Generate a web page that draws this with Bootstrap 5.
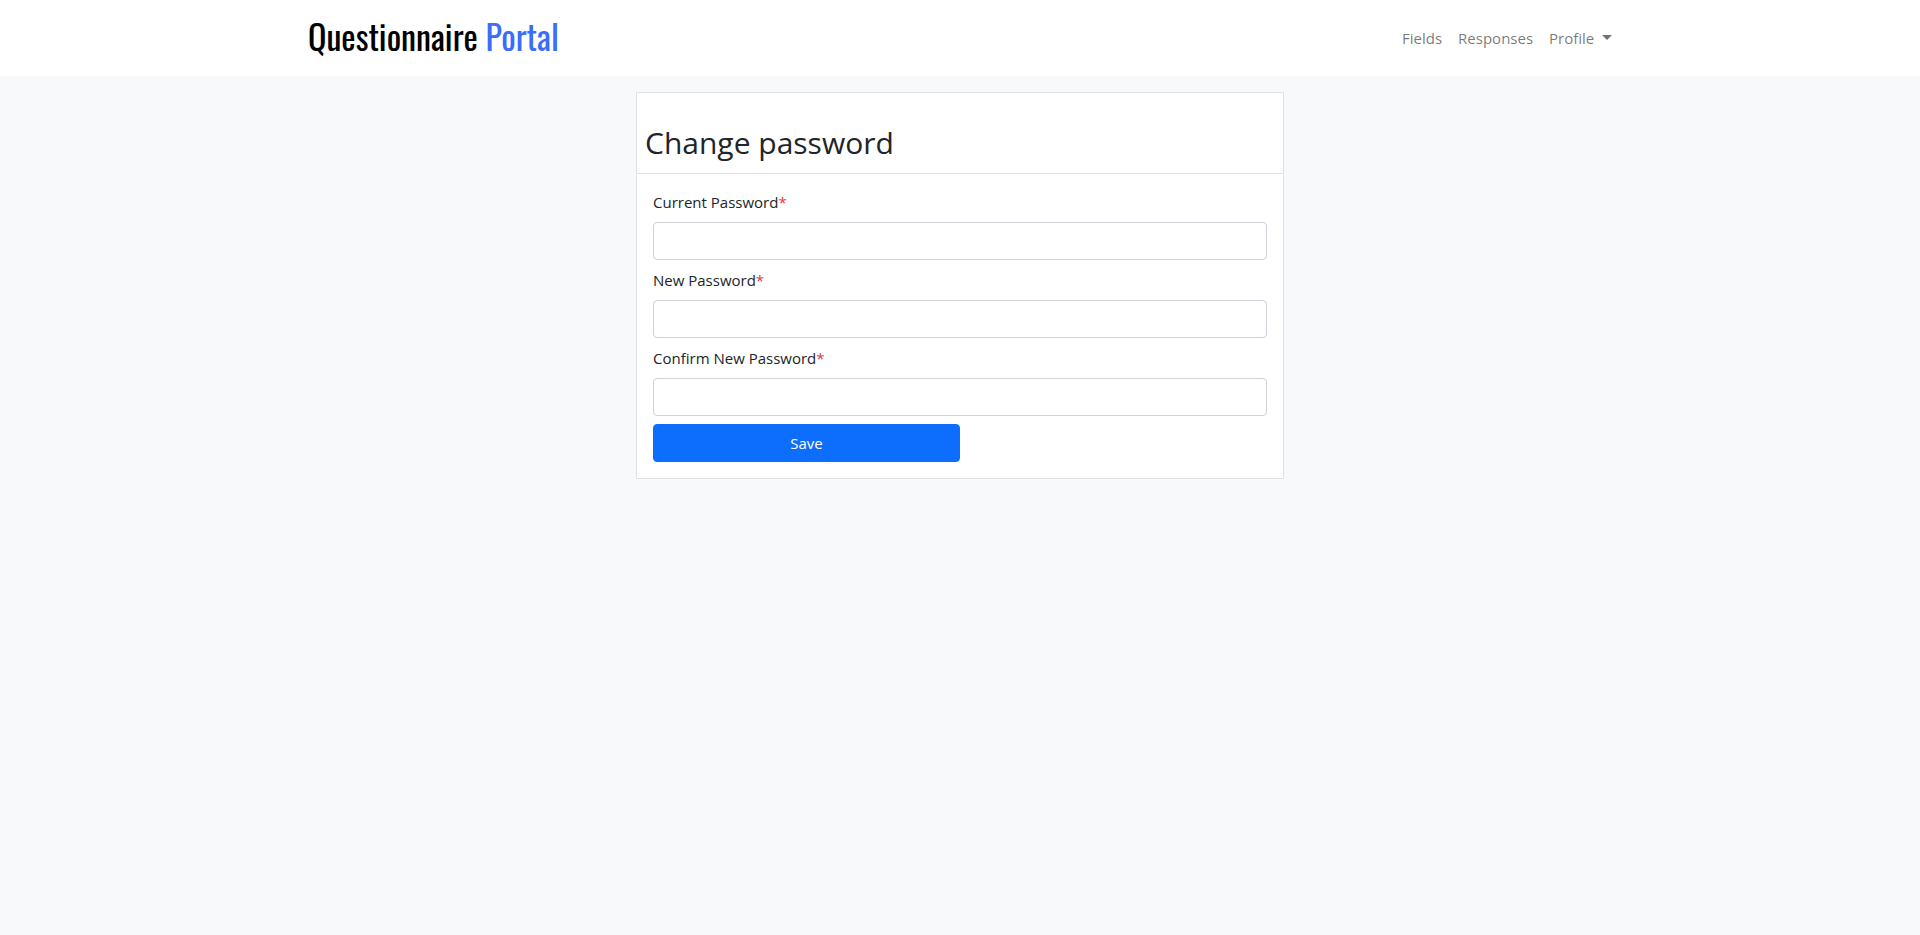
<!DOCTYPE html>
<html lang="en">
<head>
<meta charset="utf-8">
<meta name="viewport" content="width=device-width, initial-scale=1">
<title>Change password</title>
<link href="https://cdn.jsdelivr.net/npm/bootstrap@5.3.0/dist/css/bootstrap.min.css" rel="stylesheet">
<style>
  body { font-family: "Segoe UI", "Open Sans", sans-serif; font-size: 15px; line-height: 24px; background-color: #f8f9fb; }
  .site-header { min-height: 76px; }
  .site-name { font-family: Oswald, "Liberation Sans Narrow", "Roboto Condensed", "Open Sans Condensed", sans-serif; font-size: 34px; line-height: 40px; color: #000; }
  .site-name:hover { color: #000; }
  .site-name span { color: #3a6df9; }
  .site-header .nav-link { color: rgba(0, 0, 0, .55); }
  .site-header .dropdown-toggle::after { border-width: 5px 5px 0; }
  .panel { border: 1px solid #dee2e6; }
  .panel-head { padding: 30px 8px 10px; border-bottom: 1px solid #dee2e6; }
  .panel-head h1 { font-size: 30px; line-height: 40px; font-weight: 400; }
  .panel .form-control { height: 38px; border-color: #ced4da; border-radius: 4px; }
  .panel .btn { height: 38px; font-size: 15px; border-radius: 4px; background-color: #0d6efd; }
</style>
</head>
<body>
<header class="site-header navbar navbar-expand-md bg-white py-0">
  <div class="container px-2">
    <a class="site-name navbar-brand p-0 pb-1" href="#">Questionnaire <span>Portal</span></a>
    <ul class="navbar-nav flex-row">
      <li class="nav-item"><a class="nav-link px-2" href="#">Fields</a></li>
      <li class="nav-item"><a class="nav-link px-2" href="#">Responses</a></li>
      <li class="nav-item dropdown">
        <a class="nav-link dropdown-toggle ps-2 pe-0" href="#" role="button" data-bs-toggle="dropdown" aria-expanded="false">Profile&nbsp;</a>
      </li>
    </ul>
  </div>
</header>
<main class="container pt-3">
  <section class="panel bg-white w-50 mx-auto">
    <div class="panel-head"><h1 class="m-0">Change password</h1></div>
    <form class="p-3">
      <div class="mb-2">
        <label class="form-label" for="current">Current Password<span class="text-danger">*</span></label>
        <input type="password" class="form-control" id="current" required>
      </div>
      <div class="mb-2">
        <label class="form-label" for="new">New Password<span class="text-danger">*</span></label>
        <input type="password" class="form-control" id="new" required>
      </div>
      <div class="mb-2">
        <label class="form-label" for="confirm">Confirm New Password<span class="text-danger">*</span></label>
        <input type="password" class="form-control" id="confirm" required>
      </div>
      <button type="submit" class="btn btn-primary w-50 d-block">Save</button>
    </form>
  </section>
</main>
<script src="https://cdn.jsdelivr.net/npm/bootstrap@5.3.0/dist/js/bootstrap.bundle.min.js"></script>
</body>
</html>
